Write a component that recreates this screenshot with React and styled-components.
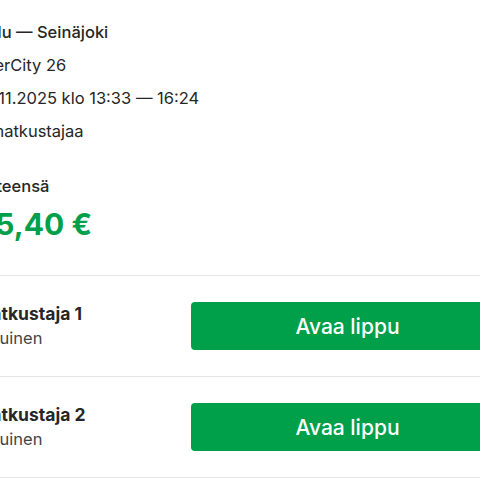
import React from "react";
import styled, { createGlobalStyle } from "styled-components";

const GlobalStyle = createGlobalStyle`
  html, body {
    margin: 0;
    background: #ffffff;
    overflow: hidden;
  }
  body {
    font-family: Inter, "Noto Sans", sans-serif;
    color: #262626;
  }
`;

const Page = styled.div`
  width: 529px;
  margin-left: -25px;
`;

const Summary = styled.section`
  padding: 20px 0 29px;
  display: flex;
  flex-direction: column;
`;

const InfoLine = styled.div`
  font-size: 16.5px;
  line-height: 24px;
  font-weight: ${({ $strong }) => ($strong ? 500 : 400)};
  margin-bottom: 9px;
`;

const TotalLabel = styled.div`
  margin-top: 22px;
  font-size: 16.5px;
  line-height: 24px;
  font-weight: 500;
`;

const TotalAmount = styled.div`
  margin-top: 4px;
  font-size: 30px;
  line-height: 44px;
  font-weight: 700;
  color: #00a04a;
`;

const PassengerRow = styled.div`
  display: flex;
  align-items: center;
  justify-content: space-between;
  padding: 26px 0;
  border-top: 1px solid #e6e6e6;
  &:last-child {
    border-bottom: 1px solid #e6e6e6;
  }
`;

const PassengerInfo = styled.div`
  display: flex;
  flex-direction: column;
`;

const PassengerName = styled.div`
  font-size: 17.5px;
  line-height: 24px;
  font-weight: 700;
`;

const PassengerType = styled.div`
  font-size: 16.5px;
  line-height: 24px;
  color: #444;
`;

const TicketButton = styled.button`
  width: 313px;
  height: 48px;
  border: none;
  border-radius: 4px;
  background: #00a04a;
  color: #ffffff;
  font-family: inherit;
  font-size: 21px;
  font-weight: 500;
  cursor: pointer;
`;

const passengers = [
  { name: "Matkustaja 1", type: "Aikuinen" },
  { name: "Matkustaja 2", type: "Aikuinen" },
];

const App = () => {
  return (
    <>
      <GlobalStyle />
      <Page>
        <Summary>
          <InfoLine $strong>Oulu — Seinäjoki</InfoLine>
          <InfoLine>InterCity 26</InfoLine>
          <InfoLine>24.11.2025 klo 13:33 — 16:24</InfoLine>
          <InfoLine>2 matkustajaa</InfoLine>
          <TotalLabel>Yhteensä</TotalLabel>
          <TotalAmount>45,40 €</TotalAmount>
        </Summary>
        <div>
          {passengers.map((p) => (
            <PassengerRow key={p.name}>
              <PassengerInfo>
                <PassengerName>{p.name}</PassengerName>
                <PassengerType>{p.type}</PassengerType>
              </PassengerInfo>
              <TicketButton>Avaa lippu</TicketButton>
            </PassengerRow>
          ))}
        </div>
      </Page>
    </>
  );
};

export default App;
